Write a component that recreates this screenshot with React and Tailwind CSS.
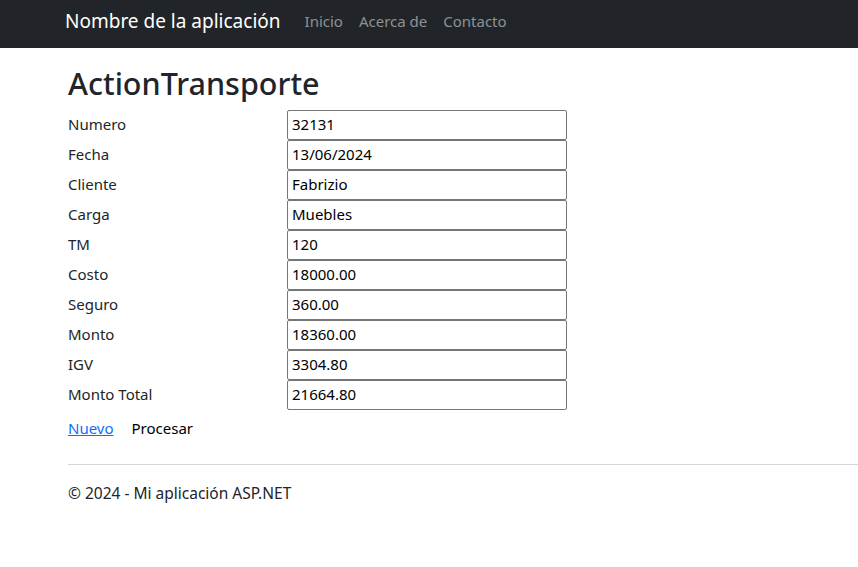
export default function App() {
  const rows = [
    ["Numero", "32131"],
    ["Fecha", "13/06/2024"],
    ["Cliente", "Fabrizio"],
    ["Carga", "Muebles"],
    ["TM", "120"],
    ["Costo", "18000.00"],
    ["Seguro", "360.00"],
    ["Monto", "18360.00"],
    ["IGV", "3304.80"],
    ["Monto Total", "21664.80"],
  ];
  return (
    <div className="min-h-[567px] bg-white text-[#212529] [font-family:'Noto_Sans',sans-serif] text-[15px]">
      <nav className="h-[48px] bg-[#212529] flex items-center pl-[65px] pb-[6px]">
        <span className="text-white text-[19px] leading-none mr-[24px]">Nombre de la aplicación</span>
        <div className="flex gap-[16px] text-[15px] leading-none text-[#8f9193]">
          <span>Inicio</span>
          <span>Acerca de</span>
          <span>Contacto</span>
        </div>
      </nav>
      <main className="pl-[68px]">
        <h2 className="text-[30.5px] font-medium leading-[1.2] pt-[17px] pb-[8px]">ActionTransporte</h2>
        <div className="flex flex-col">
          {rows.map(([l, v]) => (
            <div key={l} className="flex items-center h-[30px]">
              <span className="w-[219px]">{l}</span>
              <div className="w-[280px] h-[30px] border border-[#767676] rounded-[2px] px-[4px] flex items-center text-black">
                {v}
              </div>
            </div>
          ))}
        </div>
        <div className="flex items-center gap-[18px] mt-[7px] h-[24px]">
          <span className="text-[#0d6efd] underline">Nuevo</span>
          <span className="text-black">Procesar</span>
        </div>
        <hr className="mt-[23px] border-t border-[#d4d5d6]" />
        <p className="mt-[17px] text-[15.5px]">© 2024 - Mi aplicación ASP.NET</p>
      </main>
    </div>
  );
}
